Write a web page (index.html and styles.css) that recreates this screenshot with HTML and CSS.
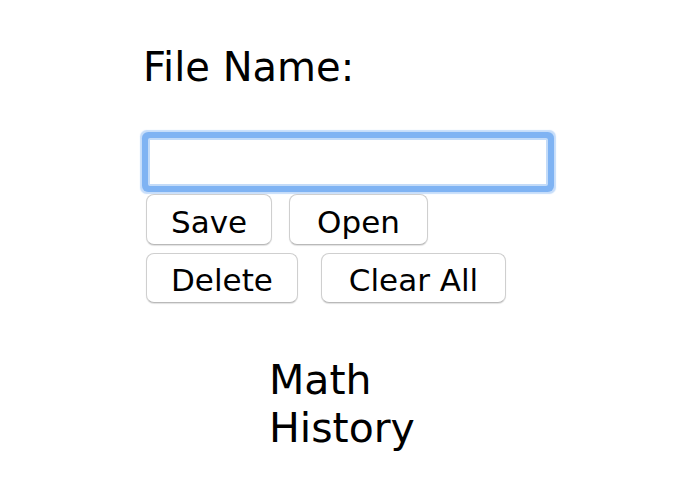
FILE: index.html
```html
<!DOCTYPE html>
<html>
<head>
<meta charset="utf-8">
<link rel="stylesheet" href="styles.css">
</head>
<body>
<div class="app">
  <div class="label">File Name:</div>
  <input class="name-input" type="text">
  <div class="btn-row row-one">
    <button class="btn">Save</button>
    <button class="btn btn-wide">Open</button>
  </div>
  <div class="btn-row row-two">
    <button class="btn">Delete</button>
    <button class="btn btn-wide">Clear All</button>
  </div>
  <ul class="files">
    <li>Math</li>
    <li>History</li>
  </ul>
</div>
</body>
</html>
```
FILE: styles.css
```css
html, body {
  margin: 0;
  padding: 0;
  background: #ffffff;
}
body {
  font-family: "DejaVu Sans", sans-serif;
  color: #000;
}
.app {
  display: flex;
  flex-direction: column;
  align-items: flex-start;
  padding: 47px 0 0 146px;
}
.label {
  font-size: 40px;
  line-height: 40px;
  margin-left: -3px;
}
.name-input {
  box-sizing: border-box;
  width: 400px;
  height: 48px;
  margin: 51px 0 0 2px;
  border: 2px solid #c3dbf8;
  border-radius: 2px;
  background: #fff;
  outline: none;
  box-shadow: 0 0 0 6px #7fb3f3, 0 0 1px 8px rgba(128, 180, 243, 0.45);
}
.btn-row {
  display: flex;
  margin-top: 8px;
}
.row-one {
  gap: 17px;
}
.row-two {
  gap: 23px;
}
.btn {
  box-sizing: border-box;
  height: 51px;
  padding: 4px 24px 0;
  font-family: "DejaVu Sans", sans-serif;
  font-size: 31px;
  line-height: 40px;
  color: #000;
  background: #fff;
  border: 1px solid #cfcfcf;
  border-bottom-color: #b9b9b9;
  border-radius: 8px;
  box-shadow: 0 1px 1px rgba(0, 0, 0, 0.12);
}
.btn-wide {
  padding: 4px 27px 0;
}
.row-two .btn {
  height: 50px;
}
.files {
  list-style: none;
  margin: 53px 0 0 123px;
  padding: 0;
  font-size: 41px;
  line-height: 48px;
}
```
